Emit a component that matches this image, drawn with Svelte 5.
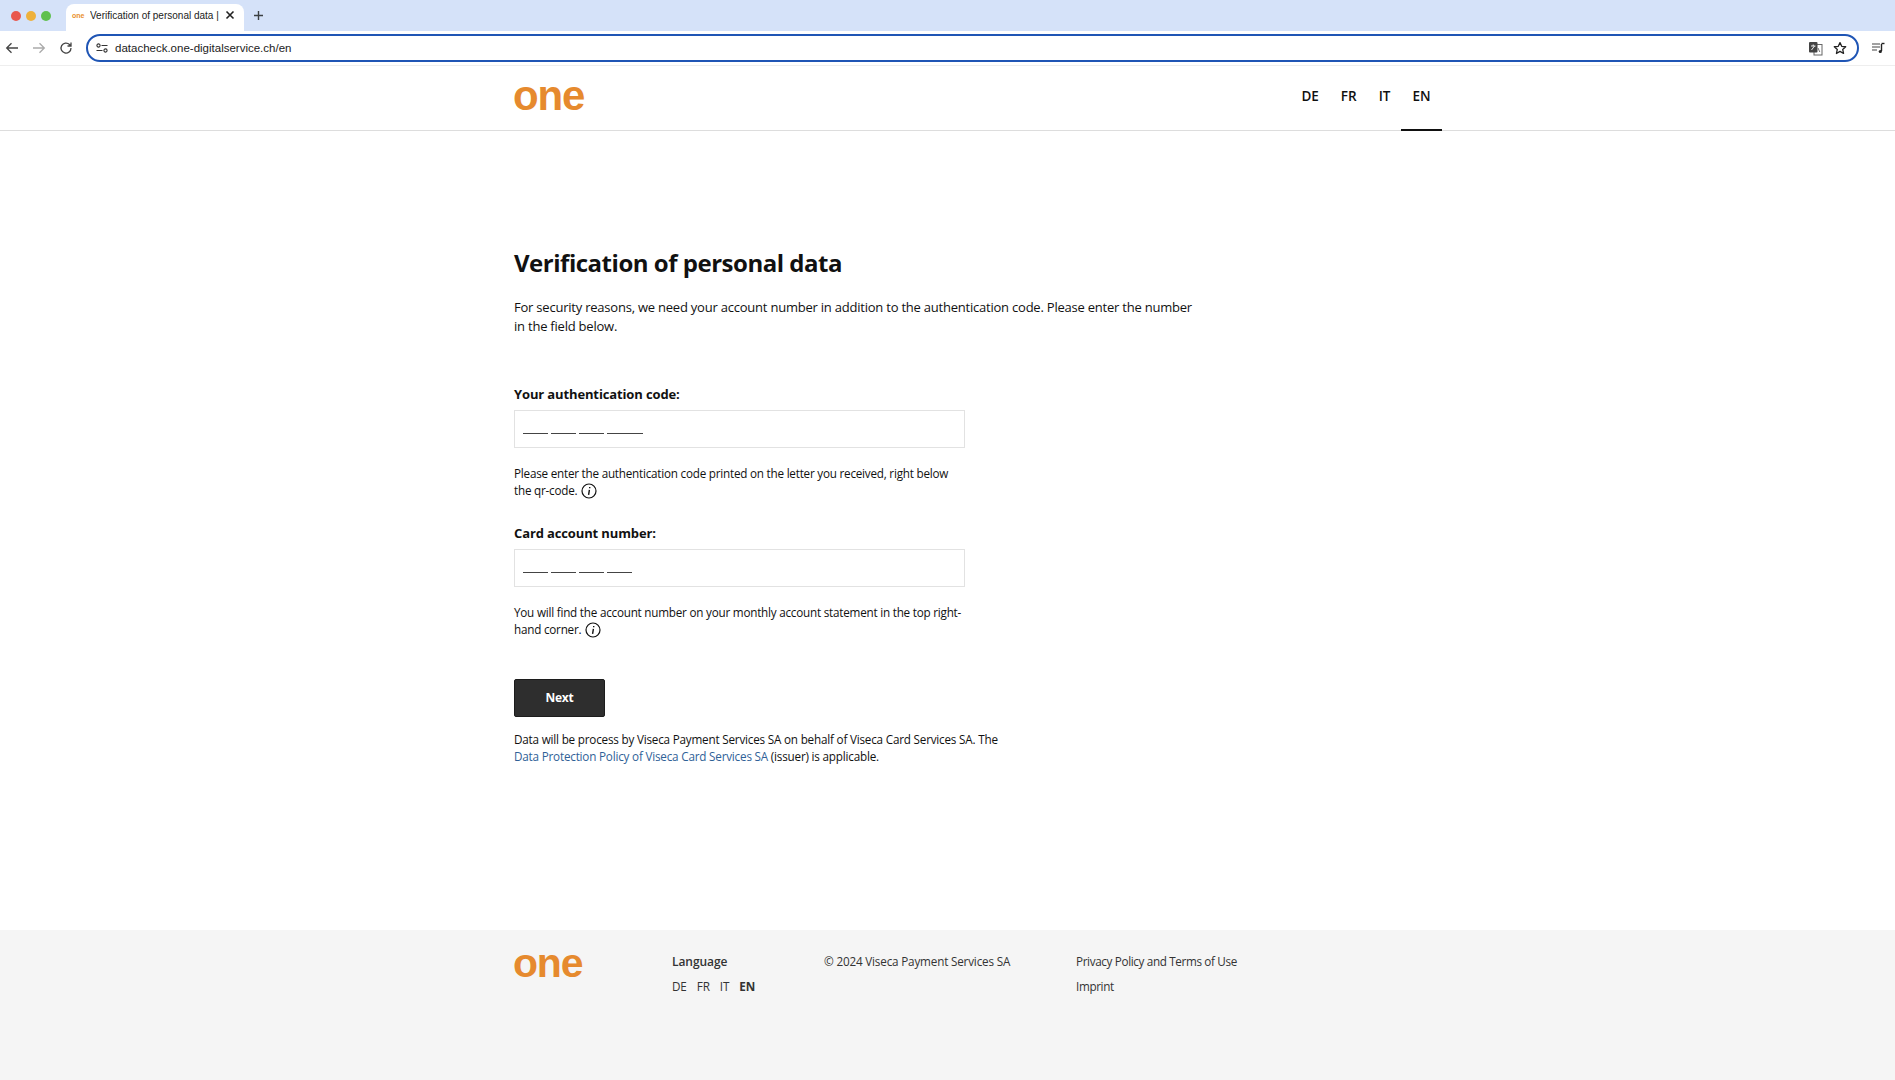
<script>
  const navLangs = ['DE', 'FR', 'IT', 'EN'];
</script>

<div class="page">
  <div class="tabstrip">
    <div class="lights">
      <span class="light red"></span>
      <span class="light amber"></span>
      <span class="light green"></span>
    </div>
    <div class="tab">
      <span class="favicon">one</span>
      <span class="tab-title">Verification of personal data |</span>
      <svg class="tab-close" width="10" height="10" viewBox="0 0 10 10"><path d="M1.5 1.5l7 7M8.5 1.5l-7 7" stroke="#222" stroke-width="1.6" fill="none"/></svg>
    </div>
    <svg class="tab-new" width="11" height="11" viewBox="0 0 11 11"><path d="M5.5 1v9M1 5.5h9" stroke="#3c4043" stroke-width="1.4" fill="none"/></svg>
  </div>

  <div class="toolbar">
    <svg class="tool first" width="14" height="14" viewBox="0 0 14 14"><path d="M13 7H2M6.5 2.2L1.7 7l4.8 4.8" stroke="#444" stroke-width="1.3" fill="none"/></svg>
    <svg class="tool" width="14" height="14" viewBox="0 0 14 14"><path d="M1 7h11M7.5 2.2L12.3 7l-4.8 4.8" stroke="#aaa" stroke-width="1.3" fill="none"/></svg>
    <svg class="tool" width="14" height="14" viewBox="0 0 14 14"><path d="M12 7a5 5 0 1 1-1.5-3.5L12 5M12 1.5V5H8.5" stroke="#444" stroke-width="1.3" fill="none"/></svg>
    <div class="omnibox">
      <svg width="12" height="10" viewBox="0 0 12 10"><circle cx="2.5" cy="2.5" r="1.6" fill="none" stroke="#333" stroke-width="1.1"/><path d="M5.5 2.5H11.5M.5 7.5H6.5" stroke="#333" stroke-width="1.2"/><circle cx="9.5" cy="7.5" r="1.6" fill="none" stroke="#333" stroke-width="1.1"/></svg>
      <span class="url">datacheck.one-digitalservice.ch/en</span>
      <svg class="translate" width="15" height="15" viewBox="0 0 15 15"><rect x="6" y="3.5" width="8" height="10.5" fill="#fff" stroke="#666" stroke-width="1"/><rect x="1" y="1" width="8.5" height="10.5" rx="1" fill="#444"/><path d="M3 5h4.5M5.2 3.5v1.5M3.5 9l3-4" stroke="#fff" stroke-width="0.9" fill="none"/><path d="M10 7l1.8 4" stroke="#666" stroke-width="0.9"/></svg>
      <svg class="star" width="14" height="14" viewBox="0 0 14 14"><path d="M7 1.6l1.7 3.7 4 .45-3 2.7.85 4L7 10.4l-3.55 2.05.85-4-3-2.7 4-.45z" fill="none" stroke="#222" stroke-width="1.3" stroke-linejoin="round"/></svg>
    </div>
    <svg class="media" width="14" height="12" viewBox="0 0 14 12"><path d="M1 2h8M1 5h8M1 8h5" stroke="#444" stroke-width="1.2"/><path d="M10.5 2v7" stroke="#222" stroke-width="1.4"/><path d="M10.5 1.5h3" stroke="#222" stroke-width="1.4"/><circle cx="9.3" cy="9.5" r="1.6" fill="#222"/></svg>
  </div>

  <header class="site-header">
    <div class="container header-row">
      <span class="logo">one</span>
      <nav class="lang-nav">
        {#each navLangs as lang}
          <a class="lang-link" class:active={lang === 'EN'} href="#top">{lang}</a>
        {/each}
      </nav>
    </div>
  </header>

  <main class="container content">
    <h1>Verification of personal data</h1>
    <p class="intro">For security reasons, we need your account number in addition to the authentication code. Please enter the number in the field below.</p>

    <form class="form">
      <div class="field">
        <label for="auth">Your authentication code:</label>
        <div class="input" id="auth">
          <span class="seg"></span><span class="seg"></span><span class="seg"></span><span class="seg long"></span>
        </div>
        <p class="help">Please enter the authentication code printed on the letter you received, right below the qr-code.
          <svg class="info" width="16" height="16" viewBox="0 0 16 16"><circle cx="8" cy="8" r="7" fill="none" stroke="#111" stroke-width="1.2"/><path d="M8.7 4v1.3M8.4 6.9 7.6 11.8" stroke="#111" stroke-width="1.4" fill="none"/></svg>
        </p>
      </div>

      <div class="field">
        <label for="acc">Card account number:</label>
        <div class="input" id="acc">
          <span class="seg"></span><span class="seg"></span><span class="seg"></span><span class="seg"></span>
        </div>
        <p class="help">You will find the account number on your monthly account statement in the top right-hand corner.
          <svg class="info" width="16" height="16" viewBox="0 0 16 16"><circle cx="8" cy="8" r="7" fill="none" stroke="#111" stroke-width="1.2"/><path d="M8.7 4v1.3M8.4 6.9 7.6 11.8" stroke="#111" stroke-width="1.4" fill="none"/></svg>
        </p>
      </div>

      <button type="button" class="next">Next</button>
    </form>

    <p class="legal">Data will be process by Viseca Payment Services SA on behalf of Viseca Card Services SA. The<br /><a href="#top">Data Protection Policy of Viseca Card Services SA</a> (issuer) is applicable.</p>
  </main>

  <footer class="site-footer">
    <div class="container footer-row">
      <span class="logo foot-logo">one</span>
      <div class="foot-lang">
        <strong>Language</strong>
        <div class="foot-langs">
          {#each navLangs as lang}
            <a href="#top" class:current={lang === 'EN'}>{lang}</a>
          {/each}
        </div>
      </div>
      <div class="foot-copy">© 2024 Viseca Payment Services SA</div>
      <div class="foot-links">
        <a href="#top">Privacy Policy and Terms of Use</a>
        <a href="#top">Imprint</a>
      </div>
    </div>
  </footer>
</div>

<style>
  :global(body) {
    margin: 0;
    background: #fff;
  }

  .page {
    height: 1080px;
    display: flex;
    flex-direction: column;
    overflow: hidden;
    font-family: 'Open Sans', 'Noto Sans', sans-serif;
    color: #111;
  }

  /* browser chrome */
  .tabstrip {
    height: 31px;
    background: #d5e2f9;
    display: flex;
    align-items: flex-end;
    flex: none;
  }

  .lights {
    display: flex;
    gap: 5px;
    width: 65px;
    padding: 0 0 10px 11px;
    box-sizing: border-box;
  }

  .light {
    width: 10px;
    height: 10px;
    border-radius: 50%;
  }

  .red { background: #e8574e; }
  .amber { background: #eeb13c; }
  .green { background: #5fc04e; }

  .tab {
    width: 178px;
    height: 27px;
    margin-left: 1px;
    background: #fff;
    border-radius: 8px 8px 0 0;
    display: flex;
    align-items: center;
    box-sizing: border-box;
    padding: 0 9px 5px 6px;
  }

  .favicon {
    font: bold 7px 'Liberation Sans', sans-serif;
    color: #e98f2c;
    width: 18px;
  }

  .tab-title {
    font: 10px 'Liberation Sans', sans-serif;
    color: #222;
    flex: 1;
    white-space: nowrap;
    overflow: hidden;
  }

  .tab-new {
    margin: 0 0 10px 9px;
  }

  .toolbar {
    height: 34px;
    flex: none;
    display: flex;
    align-items: center;
    background: #fff;
    border-bottom: 1px solid #eee;
    box-sizing: content-box;
  }

  .tool {
    margin-right: 13px;
  }

  .tool.first {
    margin-left: 5px;
  }

  .omnibox {
    width: 1773px;
    height: 28px;
    border: 2px solid #1f55b5;
    border-radius: 15px;
    display: flex;
    align-items: center;
    box-sizing: border-box;
    padding: 0 10px 0 8px;
  }

  .url {
    font: 11.5px 'Liberation Sans', sans-serif;
    color: #222;
    margin-left: 7px;
    flex: 1;
  }

  .translate {
    margin-right: 10px;
  }

  .media {
    margin-left: 12px;
  }

  /* site */
  .container {
    width: 868px;
    margin-left: 514px;
  }

  .site-header {
    height: 64px;
    flex: none;
    border-bottom: 1px solid #ddd;
    box-sizing: content-box;
  }

  .header-row {
    height: 64px;
    display: flex;
    justify-content: space-between;
    align-items: center;
  }

  .logo {
    font: bold 42px/1 'Liberation Sans', sans-serif;
    color: #e68a2e;
    letter-spacing: -1.2px;
    margin-left: -1px;
    padding-bottom: 4px;
  }

  .lang-nav {
    display: flex;
    align-self: stretch;
    margin-right: -59.5px;
  }

  .lang-link {
    font-size: 13.5px;
    font-weight: 600;
    color: #111;
    text-decoration: none;
    padding: 0 11px 4px;
    display: flex;
    align-items: center;
    height: 64px;
    box-sizing: border-box;
  }

  .lang-link.active {
    border-bottom: 2px solid #111;
    padding-bottom: 3px;
    height: 65px;
  }

  .content {
    flex: 1;
    padding-top: 117px;
    box-sizing: border-box;
  }

  h1 {
    font-size: 24px;
    letter-spacing: -0.02em;
    font-weight: 700;
    line-height: 30px;
    margin: 0 0 20px;
    color: #111;
  }

  .intro {
    width: 685px;
    font-size: 13px;
    letter-spacing: -0.017em;
    line-height: 18.5px;
    margin: 0 0 49px;
  }

  .field {
    width: 451px;
    margin-bottom: 24px;
  }

  label {
    display: block;
    font-size: 13px;
    letter-spacing: -0.01em;
    font-weight: 700;
    line-height: 20px;
    margin-bottom: 6px;
  }

  .input {
    height: 38px;
    border: 1px solid #e2e2e2;
    box-sizing: border-box;
    padding: 22px 0 0 8px;
    display: flex;
    gap: 3.5px;
    align-items: flex-start;
  }

  .seg {
    width: 24.5px;
    height: 1px;
    background: #444;
  }

  .seg.long { width: 36px; }

  .help {
    font-size: 11.7px;
    letter-spacing: -0.019em;
    line-height: 17px;
    margin: 17px 0 0;
  }

  .info {
    vertical-align: -4px;
    margin-left: 1px;
  }

  .next {
    display: block;
    width: 91px;
    height: 38px;
    margin-top: 41px;
    padding: 0 0 2px;
    background: #2e2e2e;
    border: 1px solid #1c1c1c;
    border-radius: 2px;
    color: #fff;
    font-family: inherit;
    font-size: 12px;
    letter-spacing: -0.02em;
    font-weight: 700;
  }

  .legal {
    width: 500px;
    font-size: 11.7px;
    letter-spacing: -0.017em;
    line-height: 17px;
    margin: 14px 0 0;
  }

  .legal a {
    color: #2f6197;
    text-decoration: none;
  }

  .site-footer {
    height: 150px;
    flex: none;
    background: #f5f5f5;
  }

  .footer-row {
    display: flex;
    padding-top: 19px;
    font-size: 11.7px;
    color: #333;
  }

  .foot-logo {
    width: 159px;
    font-size: 41px;
    margin-top: -6px;
    letter-spacing: -1.2px;
  }

  .foot-lang {
    width: 152px;
    letter-spacing: -0.01em;
  }

  .foot-lang strong {
    font-weight: 600;
    font-size: 12px;
    letter-spacing: -0.005em;
  }

  .foot-lang strong,
  .foot-copy,
  .foot-links a {
    line-height: 25px;
  }

  .foot-langs {
    display: flex;
    gap: 10px;
    line-height: 25px;
  }

  .foot-langs a,
  .foot-links a {
    color: #333;
    text-decoration: none;
  }

  .foot-langs a.current {
    font-weight: 700;
  }

  .foot-copy {
    width: 252px;
    letter-spacing: -0.015em;
  }

  .foot-links {
    display: flex;
    flex-direction: column;
    letter-spacing: -0.03em;
  }
</style>
